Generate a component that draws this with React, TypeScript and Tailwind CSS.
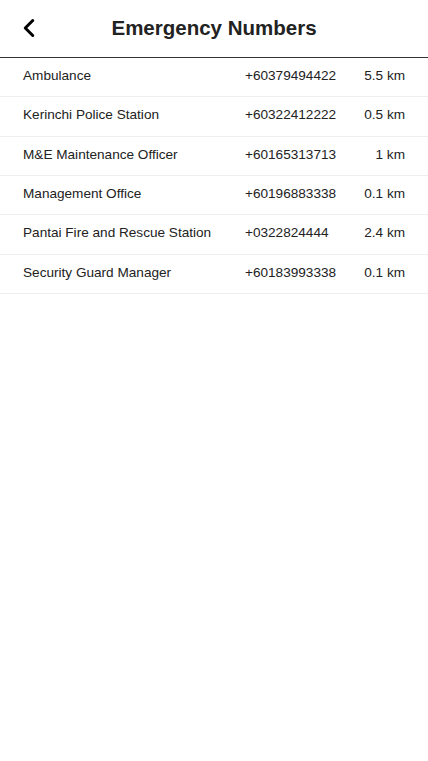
import { ChevronLeft } from 'lucide-react';

const contacts = [
  { name: 'Ambulance', phone: '+60379494422', dist: '5.5 km' },
  { name: 'Kerinchi Police Station', phone: '+60322412222', dist: '0.5 km' },
  { name: 'M&E Maintenance Officer', phone: '+60165313713', dist: '1 km' },
  { name: 'Management Office', phone: '+60196883338', dist: '0.1 km' },
  { name: 'Pantai Fire and Rescue Station', phone: '+0322824444', dist: '2.4 km' },
  { name: 'Security Guard Manager', phone: '+60183993338', dist: '0.1 km' },
];

export default function App() {
  return (
    <div className="min-h-[761px] bg-white font-['Liberation_Sans',Arial,sans-serif] text-[#222]">
      <header className="relative flex h-[58px] items-center justify-center border-b border-[#333]">
        <button className="absolute left-[14px] top-[13px] text-black">
          <ChevronLeft size={30} strokeWidth={2.4} />
        </button>
        <h1 className="text-[20.5px] font-bold text-[#222]">Emergency Numbers</h1>
      </header>
      <ul>
        {contacts.map((c) => (
          <li key={c.name} className="flex h-[39.33px] items-center border-b border-[#eee] px-[23px] pb-[2px] text-[13.6px]">
            <span className="flex-1">{c.name}</span>
            <span className="w-[100px]">{c.phone}</span>
            <span className="w-[60px] text-right">{c.dist}</span>
          </li>
        ))}
      </ul>
    </div>
  );
}
